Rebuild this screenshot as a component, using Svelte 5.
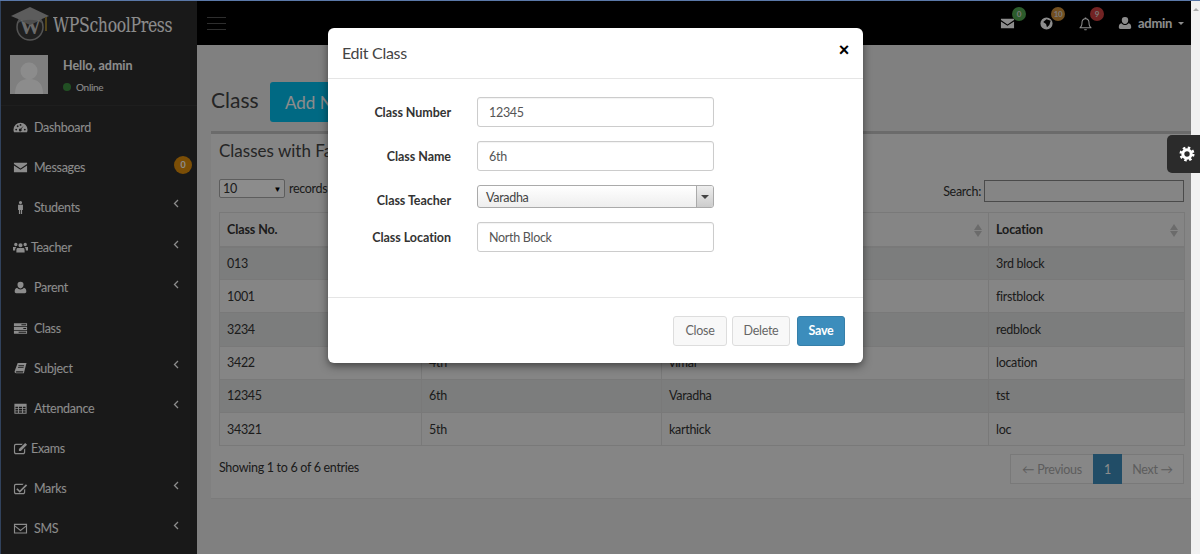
<script>
  // 16x16 icon shapes, drawn with evenodd fill
  const icons = {
    dashboard: 'M8 3a7.5 7.5 0 0 0-7.5 7.5c0 1 .2 1.8.6 2.5h13.8c.4-.7.6-1.5.6-2.5A7.5 7.5 0 0 0 8 3z M3.4 9.2a1 1 0 1 1 0 2 1 1 0 0 1 0-2z M5 5.6a1 1 0 1 1 0 2 1 1 0 0 1 0-2z M8 4.2a1 1 0 1 1 0 2 1 1 0 0 1 0-2z M12.6 9.2a1 1 0 1 1 0 2 1 1 0 0 1 0-2z M11.5 6 8.9 9.7a1.5 1.5 0 1 1-1-.5z',
    mail: 'M1 3h14v1.3L8 9 1 4.3z M1 5.8 8 10.5 15 5.8V13H1z',
    male: 'M8 1a1.7 1.7 0 1 1 0 3.4A1.7 1.7 0 0 1 8 1z M5.4 5h5.2v5.6h-.9V15H8.4v-4.4h-.8V15H6.3v-4.4h-.9z',
    group: 'M8 3.4a2.2 2.2 0 1 1 0 4.4 2.2 2.2 0 0 1 0-4.4z M3 3a1.8 1.8 0 1 1 0 3.6A1.8 1.8 0 0 1 3 3z M13 3a1.8 1.8 0 1 1 0 3.6A1.8 1.8 0 0 1 13 3z M4.6 8.4h6.8c.8.4 1 1.4 1 4v.8H3.6v-.8c0-2.6.2-3.6 1-4z M0 7.4h3.6l-.9 1.2c-.3.7-.4 1.4-.4 2.6H0z M12.4 7.4H16v3.8h-2.3c0-1.2-.1-1.9-.4-2.6z',
    user: 'M8 2a3.2 3.2 0 0 1 3.2 3.4c0 1.8-1.4 3.6-3.2 3.6S4.800 7.200 4.800 5.400A3.200 3.200 0 0 1 8 2z M4.400 8.200C5.300 9.300 6.500 10 8 10s2.700-.7 3.600-1.800c1.800.3 2.600 1.800 2.600 4.100 0 1-.7 1.700-1.600 1.700H3.400c-.9 0-1.600-.7-1.600-1.700 0-2.300.8-3.800 2.600-4.100z',
    tasks: 'M1 2.500h14v3H1z M1 6.500h14v3H1z M1 10.500h14v3H1z M9 3.500h5v1H9z M11 7.500h3v1h-3z M6 11.500h8v1H6z',
    book: 'M5 2h9.500l-.4 1.200L11.600 13H3.500c-1.200 0-2-.7-1.800-2zM5.800 4.600v.9h6v-.9z M5.300 6.600v.9h6v-.9z M3.900 10.900c-.6 0-.9.300-.9.700s.3.600.9.600h6.800l.3-1.300z',
    table: 'M1.500 3h13v10.500h-13z M2.600 6v1.600h2.700V6z M6.300 6v1.600h3.400V6z M10.700 6v1.600h2.700V6z M2.600 8.500v1.600h2.700V8.500z M6.300 8.500v1.600h3.400V8.500z M10.700 8.500v1.600h2.700V8.500z M2.600 11v1.500h2.700V11z M6.300 11v1.500h3.400V11z M10.700 11v1.500h2.700V11z',
    edit: 'M3 3h7.500l-1.200 1.200H3.200c-.6 0-1 .4-1 1v6.600c0 .6.400 1 1 1h7.600c.6 0 1-.4 1-1V9l1.200-1.200V12c0 1.200-1 2.200-2.200 2.200H3c-1.200 0-2-1-2-2.200V5.200C1 4 1.800 3 3 3z M13 2l2 2-6.600 6.600H6.300V8.500z',
    check: 'M3 3h8.400l-1.200 1.200H3.200c-.6 0-1 .4-1 1v6.600c0 .6.400 1 1 1h7.600c.6 0 1-.4 1-1V9.400L13 8.200V12c0 1.200-1 2.200-2.200 2.200H3c-1.200 0-2-1-2-2.200V5.200C1 4 1.800 3 3 3z M13.800 3.500l1.300 1.300-7.900 7.800-3.700-3.700 1.300-1.300 2.400 2.400z',
    mailo: 'M1 3h14v10.400H1z M2.200 4.200v.5L8 9.300l5.800-4.600v-.5z M2.200 6.200v6h11.600v-6L8 10.800z',
    bell: 'M7.200 1.500h1.600v1c2.400.4 3.500 2.200 3.500 4.700 0 2.500.7 3.800 2 4.800v1H1.700v-1c1.300-1 2-2.300 2-4.800 0-2.500 1.100-4.300 3.500-4.700z M8 3.500c-2 0-3.200 1.400-3.200 3.700 0 2.200-.5 3.500-1.300 4.700h9c-.8-1.200-1.300-2.500-1.300-4.700 0-2.300-1.200-3.700-3.200-3.700z M6.500 14h3c0 .8-.7 1.300-1.500 1.300S6.500 14.800 6.500 14z',
    globe: 'M8 1.500a6.500 6.500 0 1 1 0 13 6.500 6.500 0 0 1 0-13z M8 3.500 12.500 5 11 9.500 8.500 12 7.500 8.500 4.500 6.500z'
  };

  const menu = [
    { icon: 'dashboard', label: 'Dashboard' },
    { icon: 'mail', label: 'Messages', badge: '0' },
    { icon: 'male', label: 'Students', arrow: true },
    { icon: 'group', label: 'Teacher', arrow: true, tight: true },
    { icon: 'user', label: 'Parent', arrow: true },
    { icon: 'tasks', label: 'Class' },
    { icon: 'book', label: 'Subject', arrow: true },
    { icon: 'table', label: 'Attendance', arrow: true },
    { icon: 'edit', label: 'Exams', tight: true },
    { icon: 'check', label: 'Marks', arrow: true },
    { icon: 'mailo', label: 'SMS', arrow: true }
  ];

  // middle columns of the first rows sit behind the modal
  const rows = [
    ['013', '', '', '3rd block'],
    ['1001', '', '', 'firstblock'],
    ['3234', '', '', 'redblock'],
    ['3422', '4th', 'vimal', 'location'],
    ['12345', '6th', 'Varadha', 'tst'],
    ['34321', '5th', 'karthick', 'loc']
  ];

  const notes = [
    { icon: 'mail', count: '0', color: 'green' },
    { icon: 'globe', count: '10', color: 'orange' },
    { icon: 'bell', count: '9', color: 'red' }
  ];
</script>

{#snippet icon(name, size = 16)}
  <svg class="icon" width={size} height={size} viewBox="0 0 16 16"><path fill-rule="evenodd" d={icons[name]} /></svg>
{/snippet}

<div class="page">
  <aside class="sidebar">
    <div class="logo">
      <svg width="40" height="36" viewBox="0 0 40 36">
        <circle cx="20" cy="22" r="13" fill="#3a3a3a" stroke="#9a9a9a" stroke-width="1.500" />
        <text x="20" y="29" text-anchor="middle" class="logo-w">W</text>
        <path d="M20 2 39 11 20 19 1 11z" fill="#a8a8a8" />
        <path d="M8 14.500 20 20 32 14.500V18C26 13.500 14 13.500 8 18z" fill="#8e8e8e" />
        <rect x="35" y="12" width="2" height="14" fill="#9c8030" />
      </svg>
      <span class="logo-text">WPSchoolPress</span>
    </div>
    <div class="user-panel">
      <div class="avatar">
        <svg width="38" height="39" viewBox="0 0 38 39">
          <circle cx="19" cy="16" r="8.500" fill="#fff" />
          <path d="M5 39c0-10 5-15 14-15s14 5 14 15z" fill="#fff" />
        </svg>
      </div>
      <div class="user-info">
        <div class="hello">Hello, admin</div>
        <div class="online"><span class="dot"></span>Online</div>
      </div>
    </div>
    <nav class="menu">
      {#each menu as item}
        <div class="item" class:tight={item.tight}>
          {@render icon(item.icon, 15)}
          <span class="item-label">{item.label}</span>
          {#if item.badge}<span class="item-badge">{item.badge}</span>{/if}
          {#if item.arrow}
            <svg class="chev" width="6" height="9" viewBox="0 0 6 9"><path d="M5 1 1.500 4.500 5 8" fill="none" stroke="currentColor" stroke-width="1.300" /></svg>
          {/if}
        </div>
      {/each}
    </nav>
  </aside>

  <div class="main">
    <header class="topbar">
      <div class="burger"><span></span><span></span><span></span></div>
      <div class="top-right">
        {#each notes as n}
          <div class="note">
            {@render icon(n.icon, 15)}
            <span class="note-badge {n.color}">{n.count}</span>
          </div>
        {/each}
        <div class="account">
          {@render icon('user', 16)}
          <b>admin</b>
          <span class="caret"></span>
        </div>
      </div>
    </header>

    <section class="content">
      <div class="heading">
        <h1>Class</h1>
        <button class="add">Add New</button>
      </div>
      <div class="box">
        <h2>Classes with Faculty</h2>
        <div class="controls">
          <div class="length"><span class="fake-select">10<i>▼</i></span> records per page</div>
          <div class="search">Search: <input type="text" /></div>
        </div>
        <table>
          <thead>
            <tr>
              <th>Class No.</th>
              <th><span class="sort"></span></th>
              <th><span class="sort"></span></th>
              <th>Location<span class="sort"></span></th>
            </tr>
          </thead>
          <tbody>
            {#each rows as row}
              <tr>
                {#each row as cell}<td>{cell}</td>{/each}
              </tr>
            {/each}
          </tbody>
        </table>
        <div class="table-foot">
          <span>Showing 1 to 6 of 6 entries</span>
          <div class="pager">
            <span class="pg prev">← Previous</span>
            <span class="pg current">1</span>
            <span class="pg next">Next →</span>
          </div>
        </div>
      </div>
    </section>

    <div class="overlay">
      <div class="modal">
        <div class="modal-head">
          <h3>Edit Class</h3>
          <span class="x">×</span>
        </div>
        <div class="modal-body">
          <div class="field"><label for="cn">Class Number</label><input id="cn" value="12345" /></div>
          <div class="field"><label for="cm">Class Name</label><input id="cm" value="6th" /></div>
          <div class="field teacher">
            <span class="lbl">Class Teacher</span>
            <div class="teacher-select"><span>Varadha</span><i></i></div>
          </div>
          <div class="field"><label for="cl">Class Location</label><input id="cl" value="North Block" /></div>
        </div>
        <div class="modal-foot">
          <button class="btn">Close</button>
          <button class="btn">Delete</button>
          <button class="btn save">Save</button>
        </div>
      </div>
    </div>
  </div>

  <div class="scrollbar"><span></span></div>
  <div class="settings">
    <svg width="16" height="16" viewBox="0 0 16 16">
      <circle cx="8" cy="8" r="4.200" fill="none" stroke="#fff" stroke-width="3" />
      <circle cx="8" cy="8" r="6.300" fill="none" stroke="#fff" stroke-width="2.400" stroke-dasharray="2.500 2.450" />
    </svg>
  </div>
</div>

<style>
  :global(body) { margin: 0; background: #f1f1f1; }
  .page {
    position: relative;
    display: flex;
    height: 553px;
    overflow: hidden;
    border-top: 1px solid #5a78a8;
    font-family: Lato, "Noto Sans", sans-serif;
    font-size: 12.500px;
    letter-spacing: -0.3px;
    color: #333;
  }
  .icon { fill: currentColor; flex: none; }

  /* sidebar */
  .sidebar { width: 196px; flex: none; background: #2f2f2f; border-left: 1px solid #5a78a8; color: #fff; }
  .logo { display: flex; align-items: center; height: 44px; padding-left: 9px; }
  .logo-w { font-family: "Liberation Serif", serif; font-size: 21px; font-weight: bold; fill: #c4c4c4; }
  .logo-text { font-family: "DejaVu Serif Condensed", "DejaVu Serif", serif; font-stretch: condensed; font-size: 21px; color: #fff; margin: 3px 0 0 3px; letter-spacing: -0.4px; transform: scaleX(0.83); transform-origin: left center; }
  .user-panel { display: flex; height: 61px; padding: 10px 9px 0; box-sizing: border-box; border-bottom: 1px solid #383838; }
  .avatar { width: 38px; height: 39px; overflow: hidden; background: #e8e8e8; }
  .avatar svg { display: block; }
  .user-info { margin-left: 15px; }
  .hello { font-weight: bold; font-size: 12.500px; line-height: 20px; letter-spacing: 0; margin-top: 1px; }
  .online { display: flex; align-items: center; font-size: 10px; margin-top: 1px; line-height: 20px; }
  .dot { width: 8px; height: 8px; border-radius: 50%; background: #3d9140; margin-right: 5px; }
  .menu { display: flex; flex-direction: column; padding-top: 1px; }
  .item { position: relative; display: flex; align-items: center; height: 40.200px; padding-left: 12px; box-sizing: border-box; }
  .item-label { margin-left: 6px; }
  .item.tight .item-label { margin-left: 3px; }
  .item-badge { position: absolute; left: 173px; top: 9px; width: 18px; height: 18px; border-radius: 50%; background: #e08e0b; color: #fff; font-size: 9px; font-weight: bold; text-align: center; line-height: 18px; }
  .chev { position: absolute; left: 172px; top: 12px; }

  /* top bar */
  .main { position: relative; flex: 1; display: flex; flex-direction: column; min-width: 0; background: #e9e9e9; }
  .topbar { display: flex; justify-content: space-between; align-items: center; height: 44px; flex: none; background: #000; color: #fff; }
  .burger { margin-left: 10px; display: flex; flex-direction: column; gap: 5px; width: 19px; }
  .burger span { height: 1px; background: #555; }
  .top-right { display: flex; align-items: center; }
  .note { position: relative; display: flex; margin-right: 24px; }
  .note-badge { position: absolute; left: 12px; top: -9px; min-width: 14px; height: 14px; border-radius: 7px; color: #ddd; font-size: 8px; font-weight: bold; text-align: center; line-height: 14px; }
  .green { background: #50a850; }
  .orange { background: #d0903a; }
  .red { background: #d04040; }
  .account { display: flex; align-items: center; gap: 5px; margin-right: 7px; font-size: 13px; }
  .caret { width: 0; height: 0; border: 3.500px solid transparent; border-top-color: #fff; border-bottom: 0; margin-left: 1px; }

  /* content */
  .content { flex: 1; padding: 37px 0 0 14px; }
  .heading { display: flex; align-items: center; height: 40px; margin-bottom: 9px; }
  h1 { width: 59px; font-size: 21px; font-weight: 400; margin: -6px 0 0; color: #444; letter-spacing: 0; }
  .add { height: 40px; width: 110px; border: 0; border-radius: 3px; background: #00c0ef; color: #fff; font: 17px Lato, sans-serif; text-align: left; padding-left: 15px; }
  .box { border-top: 3px solid #c4c4c4; background: #f2f2f2; height: 368px; box-sizing: border-box; border-bottom: 1px solid #e0e0e0; padding: 0 7px 0 8px; }
  h2 { font-size: 17px; font-weight: 400; margin: 0; padding-top: 5px; height: 36px; box-sizing: border-box; color: #444; line-height: 24px; letter-spacing: 0; }
  .controls { display: flex; justify-content: space-between; align-items: flex-start; height: 42px; padding-top: 9px; box-sizing: border-box; }
  .fake-select { display: inline-flex; justify-content: space-between; align-items: center; width: 66px; height: 19px; box-sizing: border-box; border: 1px solid #a9a9a9; background: #fff; padding: 0 3px; border-radius: 2px; margin-right: 1px; }
  .fake-select i { font-size: 8px; font-style: normal; color: #000; }
  .search { display: flex; align-items: center; gap: 3px; margin-top: 1px; }
  .search input { width: 200px; height: 22px; box-sizing: border-box; border: 1px solid #888; background: #f2f2f2; padding: 0; }
  table { width: 965px; border-collapse: collapse; table-layout: fixed; border: 1px solid #ddd; }
  th:nth-child(1) { width: 202px; }
  th:nth-child(2) { width: 240px; }
  th:nth-child(3) { width: 327px; }
  th:nth-child(4) { width: 196px; }
  th, td { border: 1px solid #ddd; padding: 0 7px; text-align: left; position: relative; box-sizing: border-box; }
  th { height: 34px; border-bottom-width: 2px; font-weight: bold; letter-spacing: -0.1px; }
  td { height: 33.200px; }
  tbody tr:nth-child(odd) { background: #e2e4e3; }
  .sort::before, .sort::after { content: ""; position: absolute; right: 6px; border: 4px solid transparent; border-top-width: 0; border-bottom: 6px solid #c4c4c4; top: 11px; }
  .sort::after { border-bottom: 0; border-top: 6px solid #c4c4c4; top: 18px; }
  .table-foot { display: flex; justify-content: space-between; align-items: flex-start; margin-top: 8px; }
  .table-foot > span { margin-top: 6px; }
  .pager { display: flex; height: 30px; border: 1px solid #ddd; box-sizing: border-box; background: #f6f6f6; color: #aaa; }
  .pg { display: flex; align-items: center; justify-content: center; }
  .prev { width: 82px; }
  .current { width: 29px; background: #3c8dbc; color: #fff; margin: -1px 0; }
  .next { width: 61px; }

  /* modal */
  .overlay { position: absolute; inset: 0; background: rgba(0, 0, 0, 0.45); margin-left: -197px; padding-top: 27px; }
  .modal { width: 535px; height: 335px; margin: 0 auto; background: #fff; border-radius: 6px; box-shadow: 0 3px 9px rgba(0, 0, 0, 0.5); display: flex; flex-direction: column; }
  .modal-head { display: flex; justify-content: space-between; align-items: center; height: 51px; box-sizing: border-box; padding: 0 14px; border-bottom: 1px solid #e5e5e5; flex: none; }
  h3 { font-size: 16px; font-weight: 400; margin: -1px 0 0; color: #444; }
  .x { font-size: 18px; font-weight: bold; color: #000; margin: -6px 0 0; font-family: "Liberation Sans", sans-serif; }
  .modal-body { flex: 1; padding-top: 18px; display: flex; flex-direction: column; gap: 14px; }
  .field { display: flex; align-items: center; }
  .field label, .lbl { width: 123px; text-align: right; font-weight: bold; letter-spacing: -0.05px; margin-right: 26px; color: #333; }
  .field input { width: 237px; height: 30px; box-sizing: border-box; border: 1px solid #ccc; border-radius: 3px; padding: 0 11px; font: 12.500px Lato, sans-serif; letter-spacing: -0.3px; color: #555; box-shadow: inset 0 1px 1px rgba(0,0,0,.05); }
  .teacher { height: 23px; }
  .teacher .lbl { position: relative; top: 4px; }
  .teacher-select { width: 237px; height: 23px; box-sizing: border-box; display: flex; justify-content: space-between; align-items: center; border: 1px solid #aaa; border-radius: 3px; background: linear-gradient(#fff, #eee); padding-left: 8px; color: #444; }
  .teacher-select span { position: relative; top: 1px; }
  .teacher-select i { position: relative; width: 16px; height: 21px; border-left: 1px solid #aaa; background: linear-gradient(#eee, #ccc); border-radius: 0 2px 2px 0; }
  .teacher-select i::after { content: ""; position: absolute; left: 4px; top: 9px; border: 4px solid transparent; border-top: 4px solid #444; border-bottom: 0; }
  .modal-foot { display: flex; justify-content: flex-end; align-items: center; height: 66px; box-sizing: border-box; border-top: 1px solid #e5e5e5; padding: 0 18px 0 0; gap: 5px; flex: none; }
  .btn { height: 30px; border: 1px solid #ddd; border-radius: 3px; background: #f8f8f8; color: #666; font: 12.500px Lato, sans-serif; letter-spacing: -0.3px; padding: 0; width: 54px; }
  .btn:nth-child(2) { width: 58px; margin-right: 2px; }
  .save { width: 48px; background: #3c8dbc; border-color: #367fa9; color: #fff; font-weight: bold; }

  /* page edge bits */
  .scrollbar { width: 9px; flex: none; background: #f1f1f1; position: relative; }
  .scrollbar span { position: absolute; left: 2px; top: 7px; border: 3px solid transparent; border-bottom: 3px solid #aaa; border-top: 0; }
  .settings { position: absolute; right: 0; top: 134px; width: 33px; height: 38px; background: #2b2b2b; border-radius: 5px 0 0 5px; display: flex; align-items: center; justify-content: center; }
  .settings svg { margin-left: 6px; }
</style>
